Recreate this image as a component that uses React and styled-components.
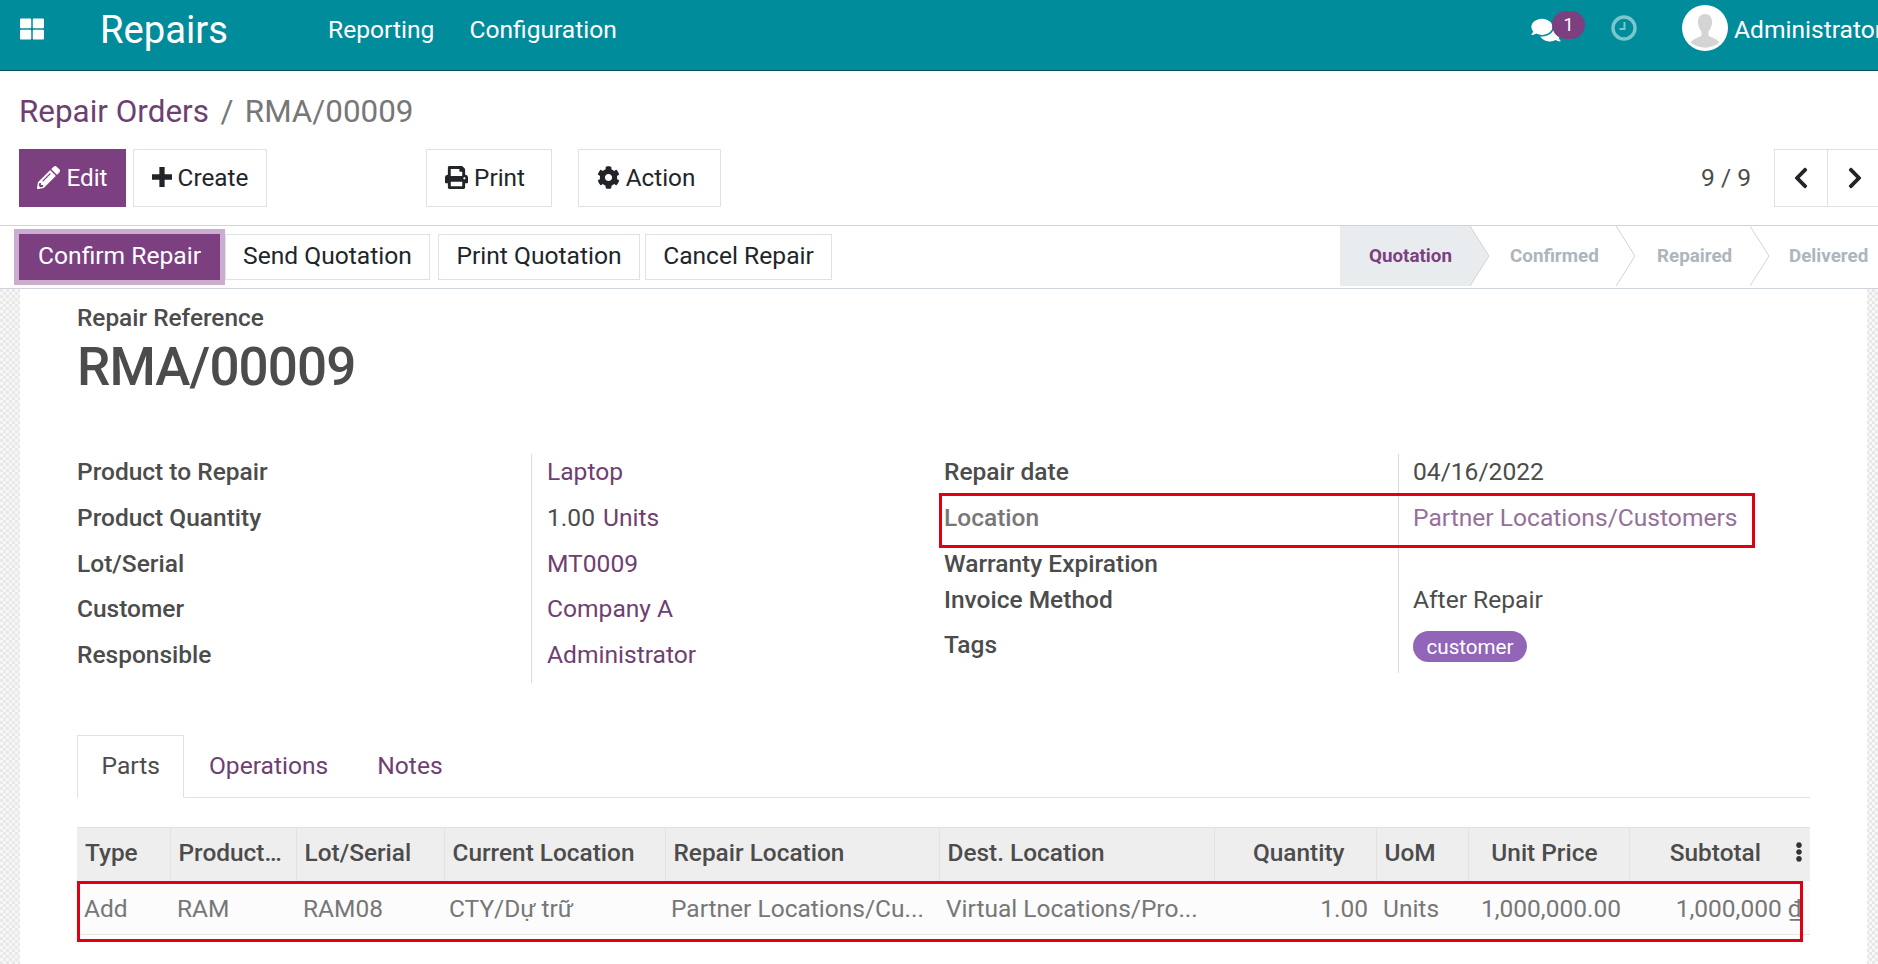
import React from "react";
import styled, { createGlobalStyle } from "styled-components";
import {
  FaThLarge,
  FaComments,
  FaPencilAlt,
  FaPrint,
  FaCog,
  FaChevronLeft,
  FaChevronRight,
  FaEllipsisV,
} from "react-icons/fa";

const Global = createGlobalStyle`
  html, body {
    margin: 0;
    padding: 0;
    background: #fff;
    overflow: hidden;
  }
  * {
    box-sizing: border-box;
  }
  body {
    font-family: "Roboto", sans-serif;
    color: #4c4c4c;
  }
`;

const Page = styled.div`
  width: 1878px;
  height: 964px;
  overflow: hidden;
  display: flex;
  flex-direction: column;
`;

const TopBar = styled.header`
  flex: 0 0 71px;
  display: flex;
  align-items: center;
  background: #018c9c;
  border-bottom: 1px solid #06505a;
  color: #fff;
  padding-left: 20px;
  overflow: hidden;
`;

const AppsIcon = styled(FaThLarge)`
  width: 24px;
  height: 24px;
  margin-top: -12px;
`;

const Brand = styled.div`
  font-size: 38.2px;
  margin-left: 56px;
  width: 228px;
  margin-top: -10px;
`;

const MenuLink = styled.a`
  font-size: 24.6px;
  margin-right: 35px;
  margin-top: -11px;
`;

const TopRight = styled.div`
  margin-left: auto;
  display: flex;
  align-items: center;
  flex: 0 0 347px;
  min-width: 0;
  height: 100%;
`;

const ChatBox = styled.div`
  position: relative;
  flex: none;
  width: 54px;
  height: 30px;
  margin-top: -13px;
`;

const ChatIcon = styled(FaComments)`
  position: absolute;
  left: 0;
  top: 3px;
  width: 30px;
  height: 26px;
`;

const Badge = styled.span`
  position: absolute;
  left: 21px;
  top: -3px;
  width: 33px;
  height: 28px;
  border-radius: 14px;
  background: #7c3f80;
  font-size: 18px;
  display: flex;
  align-items: center;
  justify-content: center;
`;

const ClockIcon = styled.svg`
  flex: none;
  width: 26px;
  height: 26px;
  margin-left: 26px;
  margin-top: -15px;
`;

const Avatar = styled.svg`
  flex: none;
  width: 46px;
  height: 46px;
  margin-left: 45px;
  margin-top: -15px;
`;

const UserName = styled.span`
  font-size: 24.6px;
  margin-left: 6px;
  margin-top: -11px;
  white-space: nowrap;
`;

const ControlPanel = styled.div`
  flex: 0 0 154px;
  padding: 23px 0 0 19px;
  position: relative;
`;

const Breadcrumb = styled.div`
  font-size: 31.4px;
  line-height: 36px;
  color: #777;
  margin-bottom: 19px;
`;

const Crumb = styled.a`
  color: #6f3f72;
`;

const Slash = styled.span`
  margin: 0 11.5px;
`;

const ButtonRow = styled.div`
  display: flex;
  align-items: flex-start;
`;

const ActionButton = styled.button`
  height: 58px;
  width: ${(p) => p.$width}px;
  margin-right: ${(p) => p.$gap || 0}px;
  display: inline-flex;
  align-items: center;
  justify-content: center;
  gap: 6px;
  font-family: inherit;
  font-size: 24.3px;
  padding: 0 ${(p) => p.$shift || 0}px 2px 0;
  background: ${(p) => (p.$primary ? "#7c3f80" : "#fff")};
  color: ${(p) => (p.$primary ? "#fff" : "#212529")};
  border: 1px solid ${(p) => (p.$primary ? "#7c3f80" : "#dee2e6")};
  svg {
    width: 23px;
    height: 23px;
    flex: none;
  }
`;

const PlusIcon = styled.svg`
  fill: currentColor;
  && {
    width: 20px;
    height: 20px;
  }
`;

const Pager = styled.div`
  margin-left: auto;
  margin-right: -3px;
  display: flex;
  align-items: center;
  height: 58px;
`;

const PagerText = styled.span`
  font-size: 24.6px;
  color: #4c4c4c;
  margin-right: 23px;
  margin-top: -2px;
`;

const PagerButton = styled.button`
  width: 54px;
  height: 58px;
  padding: 0;
  background: #fff;
  border: 1px solid #dee2e6;
  border-right-width: ${(p) => (p.$last ? 0 : "1px")};
  margin-left: ${(p) => (p.$last ? "-1px" : 0)};
  color: #212529;
  display: flex;
  align-items: center;
  justify-content: center;
  svg {
    width: 24px;
    height: 24px;
  }
`;

const StatusBar = styled.div`
  flex: 0 0 64px;
  display: flex;
  align-items: stretch;
  border-top: 1px solid #ced4da;
  border-bottom: 1px solid #ced4da;
  padding-left: 19px;
`;

const StatusActions = styled.div`
  display: flex;
  align-items: center;
  gap: 8px;
`;

const StatusButton = styled.button`
  height: 46px;
  width: ${(p) => p.$width}px;
  padding: 0 0 3px;
  font-family: inherit;
  font-size: 24.6px;
  background: ${(p) => (p.$primary ? "#7c3f80" : "#fff")};
  color: ${(p) => (p.$primary ? "#fff" : "#212529")};
  border: 1px solid ${(p) => (p.$primary ? "#7c3f80" : "#dee2e6")};
  box-shadow: ${(p) => (p.$primary ? "0 0 0 5px #ccadd0" : "none")};
  margin-right: ${(p) => p.$pull || 0}px;
`;

const Stages = styled.div`
  margin-left: auto;
  display: flex;
  height: 59px;
  margin-top: 2px;
`;

const Stage = styled.div`
  position: relative;
  width: ${(p) => p.$width}px;
  padding-left: ${(p) => p.$pad}px;
  padding-bottom: 1px;
  display: flex;
  align-items: center;
  font-size: 18.8px;
  font-weight: 700;
  color: ${(p) => (p.$active ? "#7c3f80" : "#adb5bd")};
  background: ${(p) => (p.$active ? "#e9ecef" : "transparent")};
  margin-bottom: 1px;
  margin-top: -2px;
  height: 60px;
`;

const StageArrow = styled.svg`
  position: absolute;
  left: 100%;
  top: 0;
  width: 19px;
  height: 60px;
  z-index: 1;
`;

const Workspace = styled.div`
  flex: 1;
  min-height: 0;
  display: flex;
  background-color: #e8e8e8;
  background-image: linear-gradient(45deg, #f7f7f7 25%, transparent 25%, transparent 75%, #f7f7f7 75%),
    linear-gradient(45deg, #f7f7f7 25%, transparent 25%, transparent 75%, #f7f7f7 75%);
  background-size: 6px 6px;
  background-position: 0 0, 3px 3px;
  padding: 0 11px 0 20px;
`;

const Sheet = styled.main`
  flex: 1;
  background: #fff;
  padding: 15px 57px 0 57px;
  min-width: 0;
`;

const RefLabel = styled.div`
  font-size: 24.4px;
  font-weight: 500;
  line-height: 28px;
`;

const RefTitle = styled.h1`
  margin: 3px 0 0 0;
  font-size: 53px;
  letter-spacing: -0.9px;
  line-height: 64px;
  font-weight: 500;
  color: #4c4c4c;
`;

const FormColumns = styled.div`
  display: grid;
  grid-template-columns: 867px 1fr;
  margin-top: 55px;
  height: 230px;
`;

const FieldGroup = styled.div`
  position: relative;
  display: grid;
  grid-template-columns: 455px 1fr;
  align-content: start;
`;

const FieldLabel = styled.div`
  height: ${(p) => p.$height || 45.8}px;
  line-height: 36px;
  font-size: 24.5px;
  font-weight: 500;
  color: ${(p) => (p.$muted ? "#777" : "#4c4c4c")};
  border-right: 1px solid #dcdcdc;
`;

const FieldValue = styled.div`
  height: ${(p) => p.$height || 45.8}px;
  line-height: 36px;
  font-size: 24.6px;
  padding-left: ${(p) => p.$pad || 15}px;
  color: ${(p) => p.$color || "#4c4c4c"};
`;

const LinkText = styled.a`
  color: #6f3f72;
  margin-left: ${(p) => p.$gap || 0}px;
`;

const Tag = styled.span`
  display: inline-flex;
  align-items: center;
  height: 31px;
  margin-top: 4px;
  padding: 0 13.5px;
  border-radius: 16px;
  background: #9365b8;
  color: #fff;
  font-size: 20.6px;
  line-height: 1;
`;

const RedFrame = styled.div`
  position: absolute;
  left: ${(p) => p.$left}px;
  top: ${(p) => p.$top}px;
  width: ${(p) => p.$width}px;
  height: ${(p) => p.$height}px;
  border: 3px solid #e0000f;
  pointer-events: none;
  z-index: 2;
`;

const Tabs = styled.nav`
  display: flex;
  height: 63px;
  margin-top: 51px;
  border-bottom: 1px solid #dee2e6;
`;

const Tab = styled.a`
  height: 63px;
  padding: 0 23.5px 2px;
  display: flex;
  align-items: center;
  font-size: 24.6px;
  color: ${(p) => (p.$active ? "#4c4c4c" : "#6f3f72")};
  background: ${(p) => (p.$active ? "#fff" : "transparent")};
  border: 1px solid ${(p) => (p.$active ? "#dee2e6" : "transparent")};
  border-bottom-color: ${(p) => (p.$active ? "#fff" : "transparent")};
`;

const TableWrap = styled.div`
  position: relative;
  margin-top: 29px;
`;

const Table = styled.table`
  width: 100%;
  table-layout: fixed;
  border-collapse: collapse;
  font-size: 24.5px;
`;

const HeadCell = styled.th`
  height: 53px;
  padding: 0 ${(p) => p.$right || 8}px 4px 8px;
  background: #eee;
  font-weight: 500;
  font-size: 24.4px;
  color: #4c4c4c;
  text-align: ${(p) => (p.$right ? "right" : "left")};
  border-left: 1px solid #e2e2e2;
  border-top: 1px solid #e2e2e2;
  white-space: nowrap;
  overflow: hidden;
  position: relative;
  &:first-child {
    border-left: 0;
  }
`;

const Cell = styled.td`
  height: 54px;
  padding: 2px ${(p) => (p.$right ? 8 : 5)}px 0 ${(p) => p.$left ?? 7}px;
  background: #fcfcfc;
  color: #777;
  border-bottom: 1px solid #e6e6e6;
  text-align: ${(p) => (p.$right ? "right" : "left")};
  white-space: nowrap;
  overflow: hidden;
  text-overflow: ellipsis;
`;

const Dong = styled.span`
  text-decoration: underline;
`;

const Dots = styled(FaEllipsisV)`
  position: absolute;
  right: 1px;
  top: 15px;
  width: 20px;
  height: 20px;
  color: #333;
`;

const columns = [
  { label: "Type", width: 93 },
  { label: "Product…", width: 126 },
  { label: "Lot/Serial", width: 148 },
  { label: "Current Location", width: 221 },
  { label: "Repair Location", width: 274 },
  { label: "Dest. Location", width: 275 },
  { label: "Quantity", width: 162, right: 31 },
  { label: "UoM", width: 92 },
  { label: "Unit Price", width: 161, right: 31 },
  { label: "Subtotal", width: 181, right: 49 },
];

const leftFields = [
  { label: "Product to Repair", value: <LinkText>Laptop</LinkText> },
  {
    label: "Product Quantity",
    value: (
      <>
        1.00<LinkText $gap={8}>Units</LinkText>
      </>
    ),
  },
  { label: "Lot/Serial", value: <LinkText>MT0009</LinkText> },
  { label: "Customer", value: <LinkText>Company A</LinkText> },
  { label: "Responsible", value: <LinkText>Administrator</LinkText> },
];

const rightFields = [
  { label: "Repair date", value: "04/16/2022" },
  { label: "Location", value: "Partner Locations/Customers", muted: true, color: "#97709a" },
  { label: "Warranty Expiration", value: "", height: 36 },
  { label: "Invoice Method", value: "After Repair" },
  { label: "Tags", value: <Tag>customer</Tag> },
];

export default function App() {
  return (
    <Page>
      <Global />
      <TopBar>
        <AppsIcon />
        <Brand>Repairs</Brand>
        <MenuLink>Reporting</MenuLink>
        <MenuLink>Configuration</MenuLink>
        <TopRight>
          <ChatBox>
            <ChatIcon />
            <Badge>1</Badge>
          </ChatBox>
          <ClockIcon viewBox="0 0 26 26" fill="none">
            <circle cx="13" cy="13" r="11" stroke="#7cc6ce" strokeWidth="3.4" />
            <path d="M13.5 7v7H8.5" stroke="#7cc6ce" strokeWidth="2" />
          </ClockIcon>
          <Avatar viewBox="0 0 46 46">
            <circle cx="23" cy="23" r="23" fill="#fff" />
            <path
              d="M23 9c-5 0-7.500 4-7 9 .3 3.500 1.700 6.500 3.500 8.500v4c-2 2-8.500 3-11 7a23 23 0 0 0 29 0c-2.500-4-9-5-11-7v-4c1.800-2 3.200-5 3.500-8.500.5-5-2-9-7-9z"
              fill="#d4d4d4"
            />
          </Avatar>
          <UserName>Administrator</UserName>
        </TopRight>
      </TopBar>
      <ControlPanel>
        <Breadcrumb>
          <Crumb>Repair Orders</Crumb>
          <Slash>/</Slash>
          RMA/00009
        </Breadcrumb>
        <ButtonRow>
          <ActionButton $primary $width={107} $gap={7}>
            <FaPencilAlt />
            Edit
          </ActionButton>
          <ActionButton $width={134} $gap={159}>
            <PlusIcon viewBox="0 0 19 19">
              <path d="M7 0h5v7h7v5h-7v7H7v-7H0V7h7z" />
            </PlusIcon>
            Create
          </ActionButton>
          <ActionButton $width={126} $gap={26} $shift={8}>
            <FaPrint />
            Print
          </ActionButton>
          <ActionButton $width={143} $shift={7}>
            <FaCog />
            Action
          </ActionButton>
          <Pager>
            <PagerText>9 / 9</PagerText>
            <PagerButton>
              <FaChevronLeft />
            </PagerButton>
            <PagerButton $last>
              <FaChevronRight />
            </PagerButton>
          </Pager>
        </ButtonRow>
      </ControlPanel>
      <StatusBar>
        <StatusActions>
          <StatusButton $primary $width={201} $pull={-3}>
            Confirm Repair
          </StatusButton>
          <StatusButton $width={205}>Send Quotation</StatusButton>
          <StatusButton $width={202} $pull={-3}>
            Print Quotation
          </StatusButton>
          <StatusButton $width={187}>Cancel Repair</StatusButton>
        </StatusActions>
        <Stages>
          <Stage $active $width={130} $pad={29}>
            Quotation
            <StageArrow viewBox="0 0 19 60" preserveAspectRatio="none">
              <path d="M0 0L19 30L0 60Z" fill="#e9ecef" />
              <path d="M0 0L19 30L0 60" fill="none" stroke="#ced4da" />
            </StageArrow>
          </Stage>
          <Stage $width={146} $pad={40}>
            Confirmed
            <StageArrow viewBox="0 0 19 60" preserveAspectRatio="none">
              <path d="M0 0L19 30L0 60" fill="none" stroke="#ced4da" />
            </StageArrow>
          </Stage>
          <Stage $width={134} $pad={41}>
            Repaired
            <StageArrow viewBox="0 0 19 60" preserveAspectRatio="none">
              <path d="M0 0L19 30L0 60" fill="none" stroke="#ced4da" />
            </StageArrow>
          </Stage>
          <Stage $width={128} $pad={39}>
            Delivered
          </Stage>
        </Stages>
      </StatusBar>
      <Workspace>
        <Sheet>
          <RefLabel>Repair Reference</RefLabel>
          <RefTitle>RMA/00009</RefTitle>
          <FormColumns>
            <FieldGroup>
              {leftFields.map((f) => (
                <React.Fragment key={f.label}>
                  <FieldLabel>{f.label}</FieldLabel>
                  <FieldValue>{f.value}</FieldValue>
                </React.Fragment>
              ))}
            </FieldGroup>
            <FieldGroup>
              {rightFields.map((f) => (
                <React.Fragment key={f.label}>
                  <FieldLabel $muted={f.muted} $height={f.height}>
                    {f.label}
                  </FieldLabel>
                  <FieldValue $pad={14} $color={f.color} $height={f.height}>
                    {f.value}
                  </FieldValue>
                </React.Fragment>
              ))}
              <RedFrame $left={-5} $top={39} $width={816} $height={55} />
            </FieldGroup>
          </FormColumns>
          <Tabs>
            <Tab $active>Parts</Tab>
            <Tab>Operations</Tab>
            <Tab>Notes</Tab>
          </Tabs>
          <TableWrap>
            <Table>
              <colgroup>
                {columns.map((c) => (
                  <col key={c.label} width={c.width} />
                ))}
              </colgroup>
              <thead>
                <tr>
                  {columns.map((c) => (
                    <HeadCell key={c.label} $right={c.right}>
                      {c.label}
                    </HeadCell>
                  ))}
                </tr>
              </thead>
              <tbody>
                <tr>
                  <Cell>Add</Cell>
                  <Cell>RAM</Cell>
                  <Cell>RAM08</Cell>
                  <Cell $left={5}>CTY/Dự trữ</Cell>
                  <Cell $left={6}>Partner Locations/Cu...</Cell>
                  <Cell $left={7}>Virtual Locations/Pro...</Cell>
                  <Cell $right>1.00</Cell>
                  <Cell>Units</Cell>
                  <Cell $right>1,000,000.00</Cell>
                  <Cell $right>
                    1,000,000 <Dong>₫</Dong>
                  </Cell>
                </tr>
              </tbody>
            </Table>
            <Dots />
            <RedFrame $left={0} $top={54} $width={1726} $height={61} />
          </TableWrap>
        </Sheet>
      </Workspace>
    </Page>
  );
}
